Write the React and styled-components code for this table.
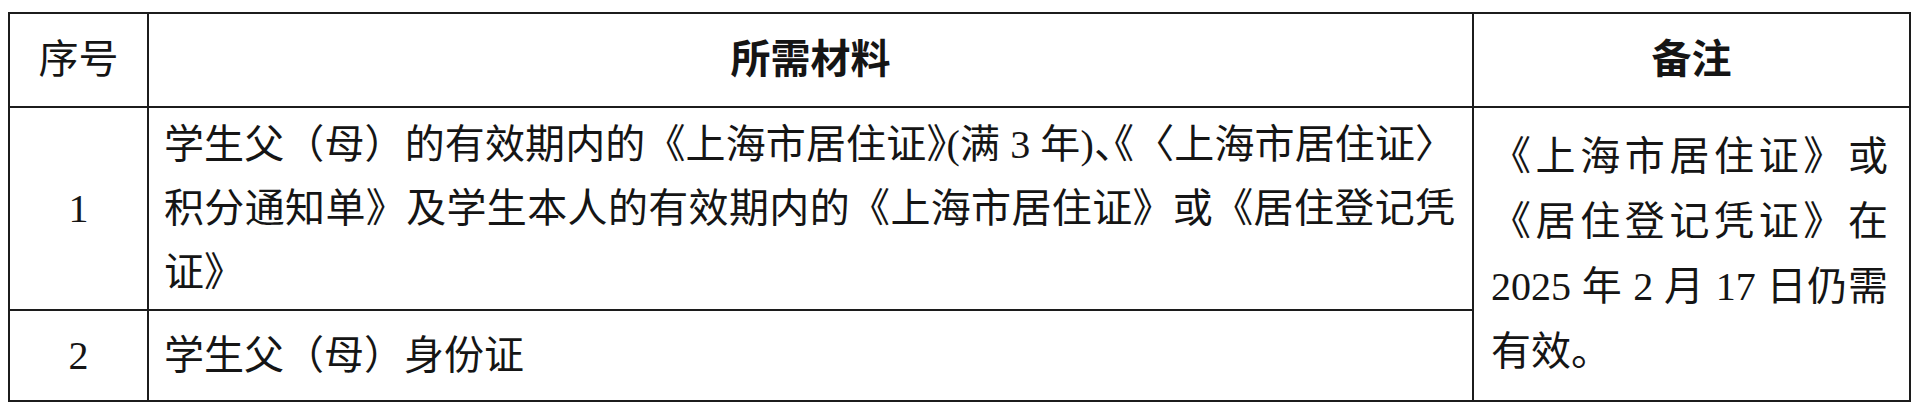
import styled, { createGlobalStyle } from "styled-components";

const GlobalStyle = createGlobalStyle`
  html, body {
    margin: 0;
    padding: 0;
    background: #ffffff;
  }
  body {
    font-family: "Liberation Serif", "Noto Sans CJK SC", serif;
    color: #151515;
  }
`;

const Page = styled.div`
  padding: 12px 8px;
`;

const Table = styled.table`
  border-collapse: collapse;
  table-layout: fixed;
  width: 1901px;
  font-size: 40px;
  text-spacing-trim: space-all;
`;

const Row = styled.tr`
  height: ${(p) => p.$h}px;
`;

const HeadCell = styled.th`
  border: 2px solid #1c1c1c;
  padding: 0;
  text-align: center;
  vertical-align: middle;
  line-height: 64px;
  font-weight: ${(p) => (p.$bold ? 700 : 400)};
`;

const NumCell = styled.td`
  border: 2px solid #1c1c1c;
  padding: 0;
  text-align: center;
  vertical-align: middle;
  line-height: 64px;
`;

const TextCell = styled.td`
  border: 2px solid #1c1c1c;
  padding: 0 17px 0 15px;
  text-align: justify;
  vertical-align: middle;
  line-height: 64px;
`;

const NoteCell = styled.td`
  border: 2px solid #1c1c1c;
  padding: 0 21px 0 17px;
  text-align: justify;
  vertical-align: middle;
  line-height: 65px;
`;

// half-width punctuation, as the original document squeezes it
const Half = styled.span`
  font-feature-settings: "halt";
`;

const rows = [
  {
    no: "1",
    h: 203,
    text: (
      <>
        学生父（母）的有效期内的《上海市居住证<Half>》</Half>(满 3 年)<Half>、</Half>
        <Half>《</Half>〈上海市居住证〉积分通知单》及学生本人的有效期内的《上海市居住证》或《居住登记凭证》
      </>
    ),
  },
  { no: "2", h: 91, text: "学生父（母）身份证" },
];

export default function App() {
  return (
    <>
      <GlobalStyle />
      <Page>
        <Table>
          <colgroup>
            <col style={{ width: 139 }} />
            <col style={{ width: 1325 }} />
            <col style={{ width: 437 }} />
          </colgroup>
          <thead>
            <Row $h={94}>
              <HeadCell>序号</HeadCell>
              <HeadCell $bold>所需材料</HeadCell>
              <HeadCell $bold>备注</HeadCell>
            </Row>
          </thead>
          <tbody>
            {rows.map((r, i) => (
              <Row key={r.no} $h={r.h}>
                <NumCell>{r.no}</NumCell>
                <TextCell>{r.text}</TextCell>
                {i === 0 && (
                  <NoteCell rowSpan={rows.length}>
                    《上海市居住证》或《居住登记凭证》在 2025 年 2 月 17 日仍需有效。
                  </NoteCell>
                )}
              </Row>
            ))}
          </tbody>
        </Table>
      </Page>
    </>
  );
}
